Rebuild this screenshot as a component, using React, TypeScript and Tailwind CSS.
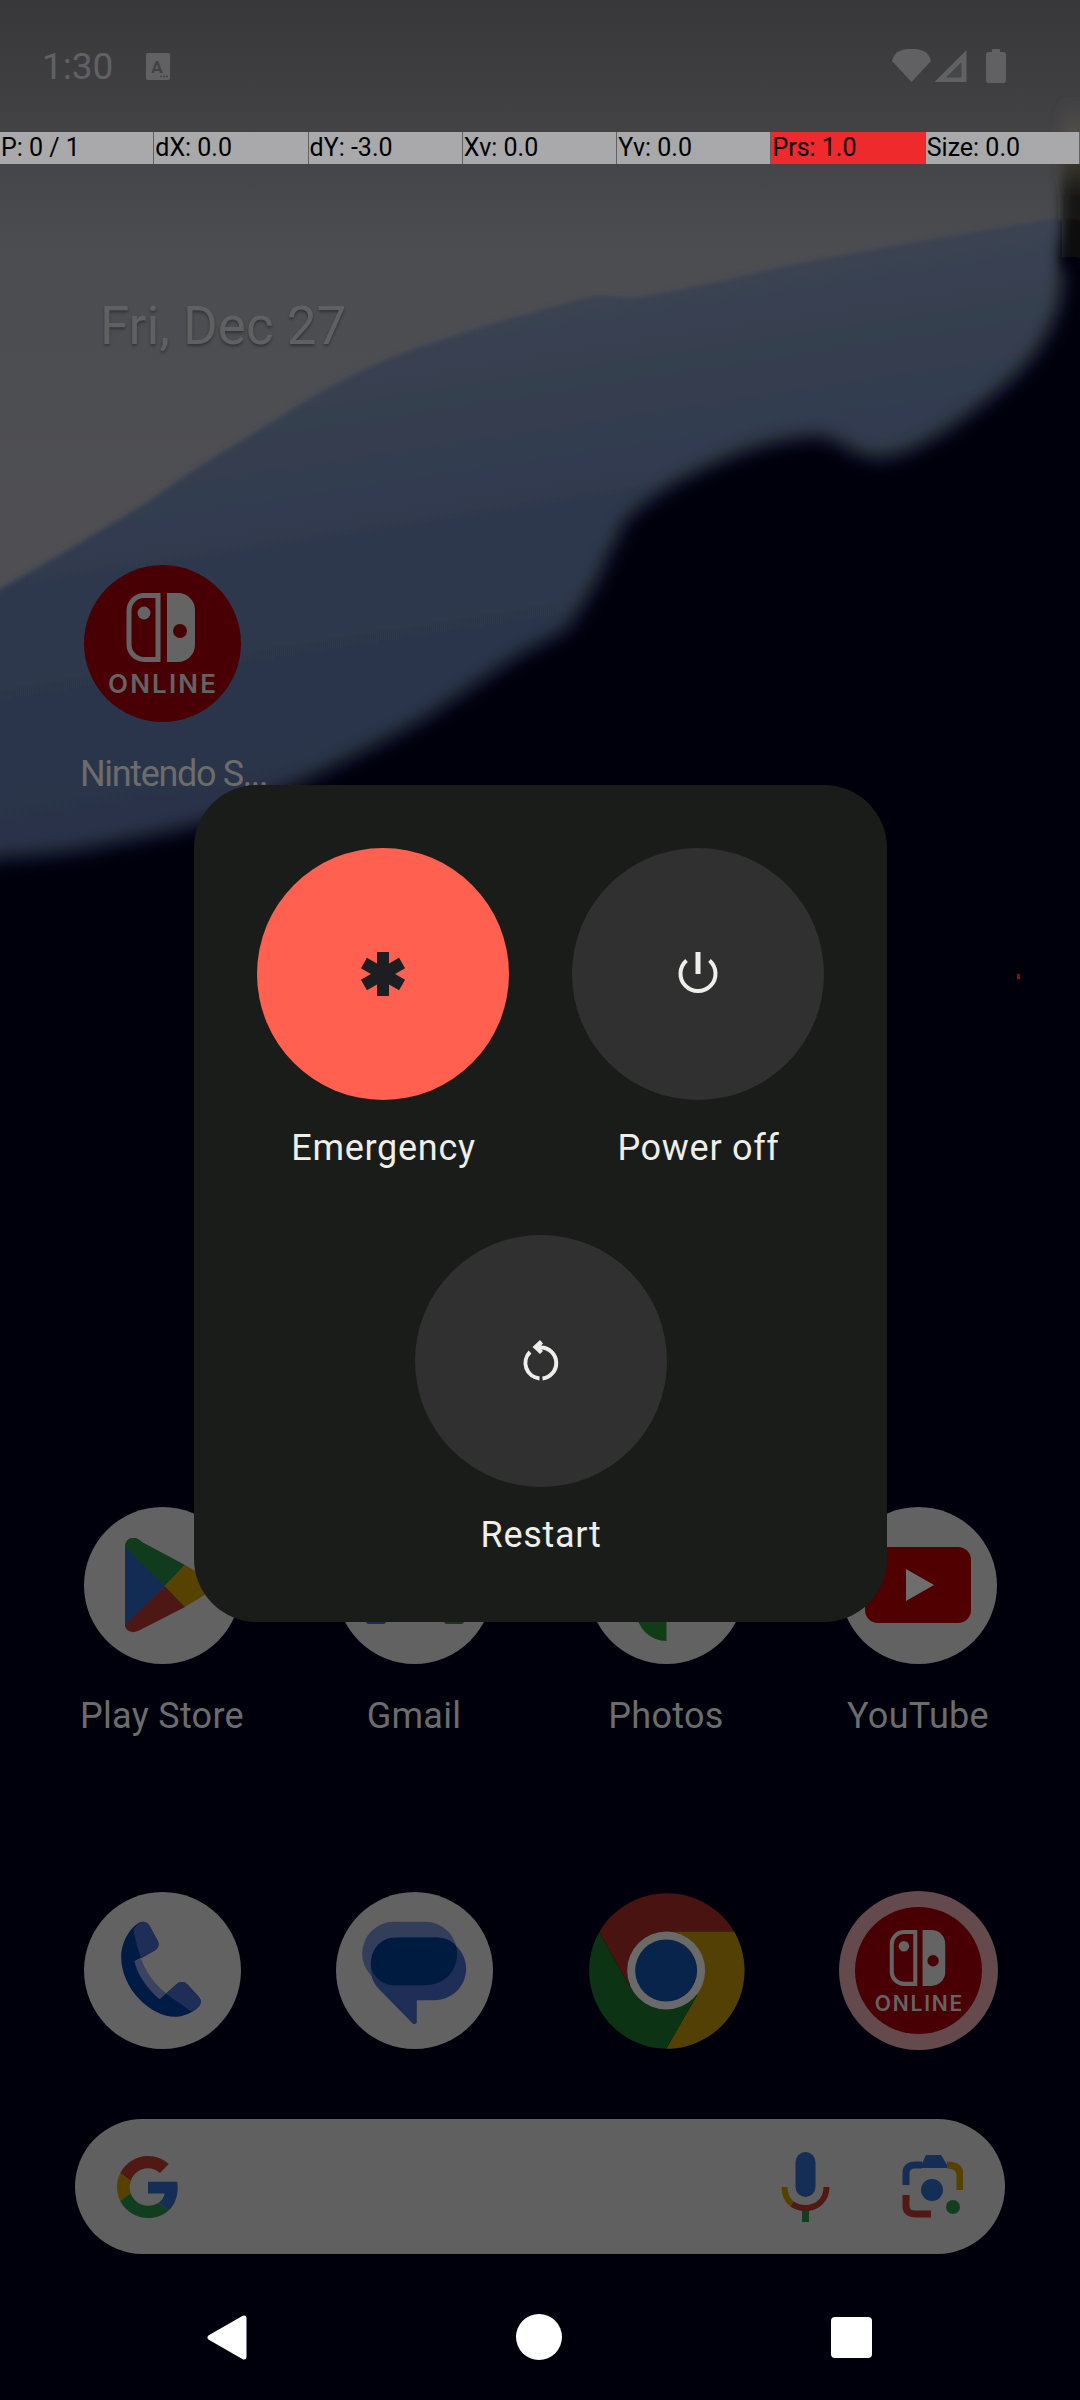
import React from "react";

const cells = [
  { t: "P: 0 / 1" },
  { t: "dX: 0.0" },
  { t: "dY: -3.0" },
  { t: "Xv: 0.0" },
  { t: "Yv: 0.0" },
  { t: "Prs: 1.0", red: true },
  { t: "Size: 0.0" },
];

function Wallpaper() {
  return (
    <svg className="absolute inset-0" width="1080" height="2400" viewBox="0 0 1080 2400">
      <defs>
        <linearGradient id="grey" gradientUnits="userSpaceOnUse" x1="0" y1="0" x2="0" y2="900">
          <stop offset="0" stopColor="#38383a" />
          <stop offset="0.14" stopColor="#424245" />
          <stop offset="0.28" stopColor="#4c4d51" />
          <stop offset="0.6" stopColor="#4f4f53" />
          <stop offset="1" stopColor="#4b4b51" />
        </linearGradient>
        <linearGradient id="blue" x1="0.3" y1="0.1" x2="0.5" y2="0.9">
          <stop offset="0" stopColor="#3d4552" />
          <stop offset="0.45" stopColor="#2f394e" />
          <stop offset="1" stopColor="#273148" />
        </linearGradient>
        <linearGradient id="strip" x1="0" y1="0" x2="0" y2="1">
          <stop offset="0" stopColor="#504f4d" stopOpacity="0" />
          <stop offset="0.22" stopColor="#524e44" />
          <stop offset="0.55" stopColor="#1a1916" />
          <stop offset="1" stopColor="#030308" />
        </linearGradient>
        <filter id="b1" x="-5%" y="-5%" width="110%" height="110%"><feGaussianBlur stdDeviation="2.5" /></filter>
        <filter id="b2" x="-5%" y="-5%" width="110%" height="110%"><feGaussianBlur stdDeviation="9" /></filter>
        <filter id="b4" x="-100%" y="-30%" width="300%" height="160%"><feGaussianBlur stdDeviation="6" /></filter>
      </defs>
      <rect width="1080" height="900" fill="url(#grey)" />
      <path
        filter="url(#b1)"
        fill="url(#blue)"
        d="M-20 600 L0 589 C60 555 110 525 151 500 C190 470 235 445 275 420 C320 390 370 365 413 349 C470 330 530 312 585 298 C600 294 620 298 634 298 C680 290 720 282 758 272 C860 250 960 235 1056 218 L1090 218 L1090 900 L-20 900 Z"
      />
      <path
        filter="url(#b2)"
        fill="#030308"
        d="M-30 864 L0 858 C40 856 70 853 103 846 C140 838 175 832 207 822 C245 808 280 792 317 775 C355 755 392 738 427 717 C455 698 482 680 510 661 C530 648 552 640 571 625 C585 600 597 585 606 560 C612 548 618 538 623 525 C632 512 642 506 654 497 C678 480 700 470 723 460 C750 448 780 440 813 436 C830 436 842 444 854 452 C868 458 882 460 895 456 C920 448 945 432 964 418 C985 402 1012 382 1033 356 C1048 335 1055 320 1060 300 C1063 280 1063 260 1063 240 L1100 240 L1100 2500 L-30 2500 Z"
      />
      <rect x="1062" y="100" width="40" height="170" fill="url(#strip)" filter="url(#b4)" />
      <rect x="1017" y="974" width="3" height="5" fill="#a0000e" />
    </svg>
  );
}

function NintendoLogo() {
  const g = "#646464";
  return (
    <g>
      <path d="M74 30.5 H60 a15 15 0 0 0 -15 15 V79.5 a15 15 0 0 0 15 15 H74 Z" fill="none" stroke={g} strokeWidth="5" />
      <circle cx="60" cy="48" r="6.5" fill={g} />
      <path d="M83 28 H94 a17 17 0 0 1 17 17 V80 a17 17 0 0 1 -17 17 H83 Z" fill={g} />
      <circle cx="96" cy="66" r="7" fill="#480004" />
      <text x="78" y="128" textAnchor="middle" fontFamily="Inter,sans-serif" fontWeight="600" fontSize="26" textLength="108" lengthAdjust="spacing" fill={g}>
        ONLINE
      </text>
    </g>
  );
}

function NintendoIcon() {
  return (
    <svg width="157" height="157" viewBox="0 0 157 157">
      <circle cx="78.5" cy="78.5" r="78.5" fill="#480004" />
      <NintendoLogo />
    </svg>
  );
}

function NintendoDock() {
  return (
    <svg width="159" height="159" viewBox="0 0 159 159">
      <circle cx="79.5" cy="79.5" r="79.5" fill="#644a4c" />
      <circle cx="79.5" cy="79.5" r="63.5" fill="#480004" />
      <g transform="translate(79.5 79.5) scale(.81) translate(-78 -78)">
        <NintendoLogo />
      </g>
    </svg>
  );
}

function Disc({ children }: { children: React.ReactNode }) {
  return (
    <svg width="157" height="157" viewBox="0 0 157 157">
      <circle cx="78.5" cy="78.5" r="78.5" fill="#626262" />
      {children}
    </svg>
  );
}

function PlayIcon() {
  return (
    <Disc>
      <path d="M41 41 Q41 31 50 31 Q55 32 58 36 L81 79 L41 120 Z" fill="#132c54" />
      <path d="M41 40 Q42 30 50 31 Q54 31 58 35 L101 58 L81 79 Z" fill="#113b1d" />
      <path d="M101 58 L125 72 Q133 78 125 85 L101 100 L81 79 Z" fill="#574200" />
      <path d="M41 118 L81 79 L101 100 L58 122 Q50 127 45 124 Q41 122 41 118 Z" fill="#4d1813" />
    </Disc>
  );
}

function GmailIcon() {
  return (
    <Disc>
      <rect x="30" y="50" width="20" height="67" rx="3" fill="#132f58" />
      <rect x="108" y="50" width="20" height="67" rx="3" fill="#113b1d" />
    </Disc>
  );
}

function PhotosIcon() {
  return (
    <Disc>
      <path d="M78.5 76 V134 A30 30 0 0 1 48.5 104 A30 30 0 0 1 78.5 76 Z" fill="#103c16" />
    </Disc>
  );
}

function YoutubeIcon() {
  return (
    <Disc>
      <rect x="25" y="40" width="106" height="76" rx="13" fill="#500000" />
      <path d="M66 62 L94 78 L66 94 Z" fill="#6e6e6e" />
    </Disc>
  );
}

function PhoneIcon() {
  return (
    <Disc>
      <g transform="translate(-3.83 -6.83) scale(.3333)">
        <path d="M187 110 C165 110 123 160 123 215 C123 310 210 395 285 395 C320 395 362 370 362 350 C362 340 355 335 350 328 L322 298 C312 288 298 288 288 298 L258 325 C215 295 180 250 163 228 L225 195 C235 188 238 178 233 168 L208 122 C203 114 196 110 187 110 Z" fill="#001c44" />
        <path d="M160 135 C167 122 178 110 187 110 C196 110 203 114 208 122 L233 168 C238 178 235 188 225 195 L183 220 C175 195 165 165 160 135 Z" fill="#1f2e56" />
        <path d="M258 325 L288 298 C298 288 312 288 322 298 L350 328 C355 335 362 340 362 350 C362 362 347 375 332 378 C310 360 280 345 258 325 Z" fill="#1f2e56" />
        <path d="M163 228 L183 220 C195 260 225 298 258 325 L238 342 C200 310 170 265 163 228 Z" fill="#3a4460" />
      </g>
    </Disc>
  );
}

function MessagesIcon() {
  return (
    <Disc>
      <g transform="translate(-255.83 -6.83) scale(.3333)">
        <rect x="846" y="110" width="285" height="190" rx="95" fill="#333f5a" />
        <path d="M966 157 H1064 C1116 157 1158 199 1158 251 C1158 303 1116 345 1064 345 H1010 V410 C1010 417 1001 419 997 414 L895 310 C880 295 872 275 872 251 C872 199 914 157 966 157 Z" fill="#1f2e56" />
        <path d="M945 157 H1070 C1098 157 1118 168 1129 185 L1131 205 C1131 260 1090 300 1035 300 H940 C905 300 872 270 872 235 C872 190 905 157 945 157 Z" fill="#001b40" />
      </g>
    </Disc>
  );
}

function ChromeIcon() {
  return (
    <svg width="157" height="157" viewBox="0 0 157 157">
      <g transform="translate(-7.83 -6.5) scale(.3333)">
        <path d="M57 140 A235 235 0 0 1 462 138 L258 138 C200 138 147 190 147 300 Z" fill="#481310" />
        <path d="M462 138 A235 235 0 0 1 258 490 L350 330 L258 138 Z" fill="#534004" />
        <path d="M57 140 A235 235 0 0 0 258 490 L350 330 L147 300 Z" fill="#0c3314" />
        <circle cx="258" cy="255" r="117" fill="#6a6a6a" />
        <circle cx="258" cy="255" r="93" fill="#08244b" />
      </g>
    </svg>
  );
}

function GoogleG() {
  return (
    <svg width="62" height="62" viewBox="0 0 48 48">
      <path fill="#501914" d="M24 9.5c3.54 0 6.71 1.22 9.21 3.6l6.85-6.85C35.9 2.38 30.47 0 24 0 14.62 0 6.51 5.38 2.56 13.22l7.98 6.19C12.43 13.72 17.74 9.5 24 9.5z" />
      <path fill="#152e55" d="M46.98 24.55c0-1.57-.15-3.09-.38-4.55H24v9.02h12.94c-.58 2.96-2.26 5.48-4.78 7.18l7.73 6c4.51-4.18 7.09-10.36 7.09-17.65z" />
      <path fill="#574100" d="M10.53 28.59c-.5-1.45-.78-2.99-.78-4.59s.27-3.14.78-4.59l-7.98-6.19C.92 16.46 0 20.12 0 24c0 3.88.92 7.54 2.56 10.78l7.97-6.19z" />
      <path fill="#113e1f" d="M24 48c6.48 0 11.93-2.13 15.89-5.81l-7.73-6c-2.15 1.45-4.92 2.3-8.16 2.3-6.26 0-11.57-4.22-13.47-9.91l-7.98 6.19C6.51 42.62 14.62 48 24 48z" />
    </svg>
  );
}

function MicIcon() {
  return (
    <svg width="49" height="70" viewBox="0 0 49 70">
      <rect x="14.5" y="0" width="20" height="45" rx="10" fill="#152e55" />
      <rect x="21" y="56" width="7" height="14" fill="#113e1f" />
      <path d="M3.5 35 C3.5 42 6 48 11 52" fill="none" stroke="#574100" strokeWidth="6" />
      <path d="M45.5 35 C45.5 49 35 56 24.5 56 C19 56 14 54 11 52" fill="none" stroke="#501914" strokeWidth="6" />
    </svg>
  );
}

function LensIcon() {
  return (
    <svg width="63" height="63" viewBox="0 0 63 63">
      <path d="M6 30 V18 C6 12 10 10 15 10 H22" fill="none" stroke="#152e55" strokeWidth="7" />
      <path d="M20 13 L26 0 H41 L49 13 Z" fill="#152e55" />
      <path d="M47 10 C55 10 60 13 60 20 V35" fill="none" stroke="#574100" strokeWidth="7" />
      <path d="M6 40 V51 C6 57 10 59 15 59 H31" fill="none" stroke="#501914" strokeWidth="7" />
      <circle cx="32" cy="35" r="11" fill="#152e55" />
      <circle cx="53" cy="52" r="7" fill="#113e1f" />
    </svg>
  );
}

function HomeCell({ label, left, children }: { label: string; left?: boolean; children: React.ReactNode }) {
  return (
    <div className="flex flex-col items-center">
      <div className="h-[157px] w-[157px]">{children}</div>
      <div className={`mt-[28px] h-[48px] w-[186px] whitespace-nowrap text-[36px] leading-[48px] text-[#6c6c6c] ${left ? "pl-[11px] text-left tracking-[-1.35px]" : "text-center tracking-[0.3px]"}`}>
        {label}
      </div>
    </div>
  );
}

function StatusBar() {
  return (
    <div className="flex h-[132px] items-center pl-[42px] pr-[74px] text-[#616163]">
      <span className="pt-[2px] text-[37px] leading-[44px]">1:30</span>
      <svg className="ml-[33px]" width="24" height="27" viewBox="0 0 24 27">
        <rect width="24" height="27" rx="2" fill="#616163" />
        <text x="11" y="20" textAnchor="middle" fontSize="17" fontWeight="700" fontFamily="Roboto,sans-serif" fill="#414144">A</text>
        <circle cx="15" cy="23.5" r="1" fill="#414144" />
        <circle cx="18" cy="23.5" r="1" fill="#414144" />
        <circle cx="21" cy="23.5" r="1" fill="#414144" />
      </svg>
      <svg className="ml-auto" width="114" height="36" viewBox="892 48 114 36">
        <path d="M892 61 C895 50 903 49 911.5 49 C920 49 928 50 931 61 L911.5 82 Z" fill="#616163" />
        <path d="M966.5 50 V82 H934.5 Z" fill="#616163" />
        <path d="M961.5 62 V77.5 H946 Z" fill="#454649" />
        <rect x="992" y="49" width="8" height="5" rx="1" fill="#616163" />
        <rect x="986" y="52" width="20" height="31" rx="3" fill="#616163" />
      </svg>
    </div>
  );
}

function PointerBar() {
  return (
    <div className="grid h-[32px] grid-cols-7 bg-[#a9a9ab] text-[25px] leading-[32px] text-black">
      {cells.map((c) => (
        <div key={c.t} className={`border-r border-[#606062] pl-[1px] ${c.red ? "bg-[#ee2a2c]" : ""}`}>
          {c.t}
        </div>
      ))}
    </div>
  );
}

function PowerGlyph() {
  return (
    <svg width="48" height="48" viewBox="0 0 48 48" fill="none" stroke="#eeeeea">
      <path d="M12.5 10.4 A17.5 17.5 0 1 0 35.5 10.4" strokeWidth="4" />
      <path d="M24 2 V24" strokeWidth="5" />
    </svg>
  );
}

function RestartGlyph() {
  return (
    <svg width="48" height="48" viewBox="0 0 48 48" fill="none">
      <path d="M13 15 A15.5 15.5 0 0 0 22.5 41.4" stroke="#eeeeea" strokeWidth="4" />
      <path d="M25.5 41.4 A15.5 15.5 0 0 0 24 10.5 H22" stroke="#eeeeea" strokeWidth="4" />
      <path d="M23 3 L15.5 10 L23 17 L26 14 L22.5 10.2 L26 6.5 Z" fill="#eeeeea" />
    </svg>
  );
}

function AsteriskGlyph() {
  return (
    <svg width="48" height="48" viewBox="0 0 48 48" fill="#1d1e22">
      <rect x="18" y="2" width="12" height="44" />
      <rect x="18" y="2" width="12" height="44" transform="rotate(60 24 24)" />
      <rect x="18" y="2" width="12" height="44" transform="rotate(120 24 24)" />
    </svg>
  );
}

function PowerButton({ label, className, children }: { label: string; className: string; children: React.ReactNode }) {
  return (
    <div className="flex w-[252px] flex-col items-center">
      <div className={`flex h-[252px] w-[252px] items-center justify-center rounded-full ${className}`}>{children}</div>
      <div className="mt-[24px] h-[48px] whitespace-nowrap pl-[1px] text-[36px] leading-[48px] tracking-[0.7px] text-[#eeeeea]">{label}</div>
    </div>
  );
}

export default function App() {
  return (
    <div className="relative h-[2400px] w-[1080px] overflow-hidden bg-[#030308] font-['Roboto',sans-serif]">
      <Wallpaper />
      <div className="relative flex flex-col">
        <StatusBar />
        <PointerBar />
        <div className="ml-[100px] mt-[132px] h-[60px] text-[53px] leading-[60px] text-[#606062] [text-shadow:0_2px_3px_rgba(0,0,0,0.35)]">
          Fri, Dec 27
        </div>
        <div className="mt-[209px] grid grid-cols-4 px-[36px]">
          <HomeCell label="Nintendo S..." left>
            <NintendoIcon />
          </HomeCell>
        </div>
        <div className="mt-[709px] grid grid-cols-4 px-[36px]">
          <HomeCell label="Play Store"><PlayIcon /></HomeCell>
          <HomeCell label="Gmail"><GmailIcon /></HomeCell>
          <HomeCell label="Photos"><PhotosIcon /></HomeCell>
          <HomeCell label="YouTube"><YoutubeIcon /></HomeCell>
        </div>
        <div className="mt-[151px] grid grid-cols-4 items-center px-[36px]">
          <div className="flex justify-center"><PhoneIcon /></div>
          <div className="flex justify-center"><MessagesIcon /></div>
          <div className="flex justify-center"><ChromeIcon /></div>
          <div className="flex justify-center"><NintendoDock /></div>
        </div>
        <div className="mx-[75px] mt-[69px] flex h-[135px] items-center rounded-full bg-[#606060] pl-[42px] pr-[42px]">
          <GoogleG />
          <div className="ml-auto"><MicIcon /></div>
          <div className="ml-[70px]"><LensIcon /></div>
        </div>
        <div className="mt-[20px] flex h-[126px] items-center justify-between pl-[207px] pr-[208px]">
          <svg width="40" height="45" viewBox="0 0 40 45">
            <path d="M37 3 V42 L3 22.5 Z" fill="#ffffff" stroke="#ffffff" strokeWidth="5" strokeLinejoin="round" />
          </svg>
          <div className="h-[46px] w-[46px] rounded-full bg-white" />
          <div className="h-[41px] w-[41px] rounded-[4px] bg-white" />
        </div>
      </div>
      <div className="absolute left-[194px] top-[785px] flex h-[837px] w-[693px] flex-col items-center gap-[63px] rounded-[63px] bg-[#1a1c1a] pt-[63px]">
        <div className="flex gap-[63px]">
          <PowerButton label="Emergency" className="bg-[#ff6050]"><AsteriskGlyph /></PowerButton>
          <PowerButton label="Power off" className="bg-[#303030]"><PowerGlyph /></PowerButton>
        </div>
        <PowerButton label="Restart" className="bg-[#303030]"><RestartGlyph /></PowerButton>
      </div>
    </div>
  );
}
